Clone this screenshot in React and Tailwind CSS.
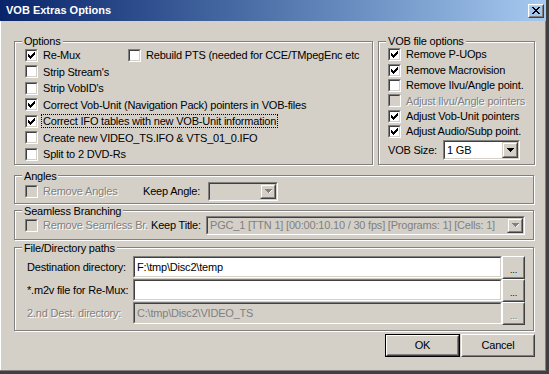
import React from "react";

function Check({ checked, disabled }) {
  return (
    <span className="flex h-[13px] w-[13px] shrink-0 border border-t-[#808080] border-l-[#808080] border-b-white border-r-white">
      <span
        className={
          disabled
            ? "flex h-full w-full items-center justify-center border border-t-[#404040] border-l-[#404040] border-b-[#D4D0C8] border-r-[#D4D0C8] bg-[#D4D0C8]"
            : "flex h-full w-full items-center justify-center border border-t-[#404040] border-l-[#404040] border-b-[#D4D0C8] border-r-[#D4D0C8] bg-white"
        }
      >
        {checked && (
          <svg width="7" height="7" viewBox="0 0 7 7" shapeRendering="crispEdges">
            <path d="M6 0h1v3h-1zM5 1h1v3h-1zM4 2h1v3h-1zM3 3h1v3h-1zM2 4h1v3h-1zM1 3h1v3h-1zM0 2h1v3h-1z" fill="#000" />
          </svg>
        )}
      </span>
    </span>
  );
}

function CheckRow({ label, checked, disabled, focus, h = "h-[16.5px]" }) {
  return (
    <div className={`flex items-center gap-[5px] ${h}`}>
      <Check checked={checked} disabled={disabled} />
      <span
        className={
          disabled
            ? "whitespace-nowrap text-[#808080] [text-shadow:1px_1px_0_#fff]"
            : focus
            ? "whitespace-nowrap outline-1 outline-dotted outline-black -ml-[1px] px-[1px] leading-[12px]"
            : "whitespace-nowrap"
        }
      >
        {label}
      </span>
    </div>
  );
}

function Group({ title, className, children }) {
  return (
    <fieldset
      className={`border border-[#808080] shadow-[1px_1px_0_#fff,inset_1px_1px_0_#fff] ${className}`}
    >
      <legend className="ml-[7px] bg-[#D4D0C8] px-[2px] leading-[12px]">{title}</legend>
      {children}
    </fieldset>
  );
}

function Arrow({ disabled }) {
  return (
    <svg width="7" height="4" viewBox="0 0 7 4" shapeRendering="crispEdges">
      <path d="M0 0h7v1h-7zM1 1h5v1h-5zM2 2h3v1h-3zM3 3h1v1h-1z" fill={disabled ? "#808080" : "#000"} />
      {disabled && <path d="M4 3h1v1h-1zM5 2h1v1h-1zM6 1h1v1h-1z" fill="#fff" />}
    </svg>
  );
}

function Combo({ value, disabled, className }) {
  return (
    <div className={`flex border border-t-[#808080] border-l-[#808080] border-r-white border-b-white ${className}`}>
      <div
        className={
          disabled
            ? "flex flex-1 items-center border border-t-[#404040] border-l-[#404040] border-r-[#D4D0C8] border-b-[#D4D0C8] bg-[#D4D0C8] overflow-hidden"
            : "flex flex-1 items-center border border-t-[#404040] border-l-[#404040] border-r-[#D4D0C8] border-b-[#D4D0C8] bg-white overflow-hidden"
        }
      >
        <span
          className={
            disabled
              ? "flex-1 whitespace-nowrap overflow-hidden pl-[2px] text-[#808080]"
              : "flex-1 whitespace-nowrap overflow-hidden pl-[2px]"
          }
        >
          {value}
        </span>
        <div className="flex h-full w-[16px] shrink-0 border border-t-[#D4D0C8] border-l-[#D4D0C8] border-r-[#404040] border-b-[#404040]">
          <div className="flex flex-1 items-center justify-center border border-t-white border-l-white border-r-[#808080] border-b-[#808080] bg-[#D4D0C8]">
            <Arrow disabled={disabled} />
          </div>
        </div>
      </div>
    </div>
  );
}

function Raised({ className, children, isDefault }) {
  const inner = (
    <div className="flex h-full w-full border border-t-white border-l-white border-r-[#404040] border-b-[#404040]">
      <div className="flex flex-1 items-center justify-center border border-t-[#D4D0C8] border-l-[#D4D0C8] border-r-[#808080] border-b-[#808080]">
        {children}
      </div>
    </div>
  );
  if (isDefault) {
    return <div className={`flex border border-black ${className}`}>{inner}</div>;
  }
  return <div className={`flex ${className}`}>{inner}</div>;
}

function PathRow({ label, value, disabled, white }) {
  return (
    <div className="flex h-[23px] items-center">
      <span
        className={
          disabled
            ? "w-[106px] shrink-0 whitespace-nowrap text-[#808080] [text-shadow:1px_1px_0_#fff]"
            : "w-[106px] shrink-0 whitespace-nowrap"
        }
      >
        {label}
      </span>
      <div className="flex h-[22px] w-[369px] border border-t-[#808080] border-l-[#808080] border-r-white border-b-white">
        <div
          className={
            white
              ? "flex flex-1 items-center border border-t-[#404040] border-l-[#404040] border-r-[#D4D0C8] border-b-[#D4D0C8] bg-white pl-[2px]"
              : "flex flex-1 items-center border border-t-[#404040] border-l-[#404040] border-r-[#D4D0C8] border-b-[#D4D0C8] bg-[#D4D0C8] pl-[2px] text-[#808080]"
          }
        >
          {value}
        </div>
      </div>
      <Raised className="h-[23px] w-[23px]">
        <span
          className={
            disabled
              ? "text-[9px] leading-none text-[#808080] [text-shadow:1px_1px_0_#fff] pt-[6px]"
              : "text-[9px] leading-none pt-[6px]"
          }
        >
          ...
        </span>
      </Raised>
    </div>
  );
}

export default function App() {
  return (
    <div className="flex h-[374px] w-[549px] flex-col overflow-hidden bg-[#D4D0C8] font-['Liberation_Sans',Arial,sans-serif] text-[11px] tracking-[-0.2px] text-black shadow-[inset_-3px_-3px_0_#404040,inset_-4px_-4px_0_#808080,inset_1px_0_0_#fff]">
      {/* Title bar */}
      <div className="flex h-[21px] w-[546px] shrink-0 items-center justify-between bg-gradient-to-r from-[#0A246A] to-[#A6CAF0] pl-[6px] pr-[2px]">
        <span className="text-[11px] font-bold leading-none tracking-normal text-white">VOB Extras Options</span>
        <Raised className="h-[14px] w-[16px]">
          <svg width="8" height="7" viewBox="0 0 8 7" shapeRendering="crispEdges">
            <path d="M0 0h2v1h-2zM6 0h2v1h-2zM1 1h2v1h-2zM5 1h2v1h-2zM2 2h4v1h-4zM3 3h2v1h-2zM2 4h4v1h-4zM1 5h2v1h-2zM5 5h2v1h-2zM0 6h2v1h-2zM6 6h2v1h-2z" fill="#000" />
          </svg>
        </Raised>
      </div>

      {/* Body */}
      <div className="flex flex-col pl-[14px]">
        <div className="mt-[14px] flex gap-[5px]">
          <Group title="Options" className="w-[359px] pb-[1px]">
            <div className="flex flex-col pl-[10px]">
              <div className="flex">
                <div className="w-[103px]">
                  <CheckRow label="Re-Mux" checked />
                </div>
                <CheckRow label="Rebuild PTS (needed for CCE/TMpegEnc etc" />
              </div>
              <CheckRow label="Strip Stream's" />
              <CheckRow label="Strip VobID's" />
              <CheckRow label="Correct Vob-Unit (Navigation Pack) pointers in VOB-files" checked />
              <CheckRow label="Correct IFO tables with new VOB-Unit information" checked focus />
              <CheckRow label="Create new VIDEO_TS.IFO & VTS_01_0.IFO" />
              <CheckRow label="Split to 2 DVD-Rs" />
            </div>
          </Group>
          <Group title="VOB file options" className="w-[157px] pb-[3px]">
            <div className="flex flex-col pl-[9px]">
              <CheckRow h="h-[15.4px]" label="Remove P-UOps" checked />
              <CheckRow h="h-[15.4px]" label="Remove Macrovision" checked />
              <CheckRow h="h-[15.4px]" label="Remove Ilvu/Angle point." />
              <CheckRow h="h-[15.4px]" label="Adjust Ilvu/Angle pointers" disabled />
              <CheckRow h="h-[15.4px]" label="Adjust Vob-Unit pointers" checked />
              <CheckRow h="h-[15.4px]" label="Adjust Audio/Subp point." checked />
              <div className="mt-[1px] flex h-[20px] items-center">
                <span className="w-[55px] shrink-0">VOB Size:</span>
                <Combo value="1 GB" className="h-[20px] w-[77px]" />
              </div>
            </div>
          </Group>
        </div>

        <Group title="Angles" className="mt-[5px] w-[520px] pb-[2px]">
          <div className="flex h-[19px] items-center pl-[10px]">
            <Check disabled />
            <span className="ml-[5px] w-[100px] shrink-0 whitespace-nowrap text-[#808080] [text-shadow:1px_1px_0_#fff]">
              Remove Angles
            </span>
            <span className="w-[65px] shrink-0 whitespace-nowrap">Keep Angle:</span>
            <Combo value="" disabled className="h-[19px] w-[70px]" />
          </div>
        </Group>

        <Group title="Seamless Branching" className="mt-[1px] w-[520px] pb-[4px]">
          <div className="-mt-[1px] flex h-[19px] items-center pl-[10px]">
            <Check disabled />
            <span className="ml-[5px] w-[108px] shrink-0 whitespace-nowrap text-[#808080] [text-shadow:1px_1px_0_#fff]">
              Remove Seamless Br.
            </span>
            <span className="w-[55px] shrink-0 whitespace-nowrap">Keep Title:</span>
            <Combo
              value="PGC_1 [TTN 1] [00:00:10.10 / 30 fps] [Programs: 1] [Cells: 1]"
              disabled
              className="h-[19px] w-[319px]"
            />
          </div>
        </Group>

        <Group title="File/Directory paths" className="mt-[2px] w-[520px] pb-[5px]">
          <div className="mt-[2px] flex flex-col pl-[12px]">
            <PathRow label="Destination directory:" value="F:\tmp\Disc2\temp" white />
            <PathRow label="*.m2v file for Re-Mux:" value="" white />
            <PathRow label="2.nd Dest. directory:" value="C:\tmp\Disc2\VIDEO_TS" disabled />
          </div>
        </Group>

        <div className="mt-[3px] flex w-[521px] justify-end gap-[1px]">
          <Raised isDefault className="h-[23px] w-[75px]">
            <span>OK</span>
          </Raised>
          <Raised className="h-[23px] w-[74px]">
            <span>Cancel</span>
          </Raised>
        </div>
      </div>
    </div>
  );
}
